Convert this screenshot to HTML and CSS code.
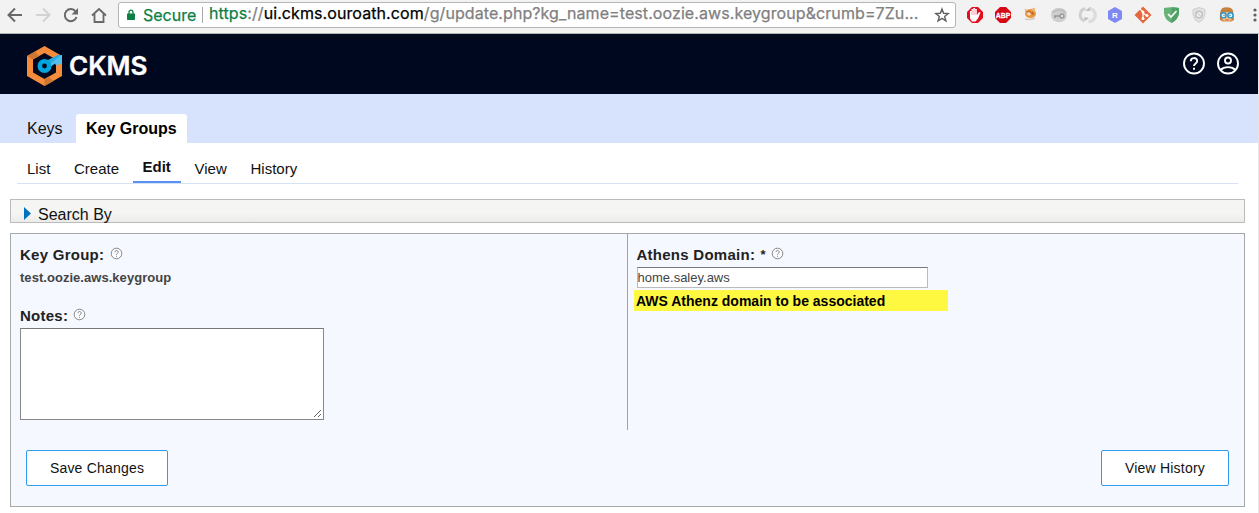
FILE: index.html
```html
<!DOCTYPE html>
<html lang="en">
<head>
<meta charset="utf-8">
<title>CKMS</title>
<link rel="stylesheet" href="styles.css">
</head>
<body>
<div class="browser">
  <svg class="nav-icons" width="118" height="33" viewBox="0 0 118 33" fill="none" stroke="#686868" stroke-width="2">
    <path d="M22 15H9M15 8.500 8.500 15l6.500 6.500"/>
    <path stroke="#d2d2d2" d="M36 15h13M43 8.500 49.500 15 43 21.500"/>
    <path d="M75.600 11.500A6 6 0 1 0 76.500 17"/>
    <path fill="#686868" stroke="none" d="M78 8v6.500h-6.500z"/>
    <path d="M92 15.500 99 9l7 6.500M94.500 14v8h9v-8" stroke-width="1.800"/>
  </svg>
  <div class="omnibox">
    <svg class="lock" width="8" height="12" viewBox="0 0 8 12"><path d="M2 5V3.200a2 2 0 0 1 4 0V5" fill="none" stroke="#0b8043" stroke-width="1.300"/><rect y="4.500" width="8" height="6.500" rx=".7" fill="#0b8043"/></svg>
    <span class="secure">Secure</span>
    <span class="sep"></span>
    <span class="url"><span class="scheme">https</span>://<span class="host">ui.ckms.ouroath.com</span>/g/update.php?kg_name=test.oozie.aws.keygroup&amp;crumb=7Zu...</span>
    <svg class="star" width="16" height="16" viewBox="0 0 16 16"><path d="m8 2 1.600 4.300 4.600.2-3.600 2.900 1.300 4.400L8 11.300l-3.900 2.500 1.300-4.400-3.600-2.900 4.600-.2z" fill="none" stroke="#606060" stroke-width="1.400"/></svg>
  </div>
  <svg class="extensions" width="303" height="33" viewBox="956 0 303 33">
    <path d="M972 7h6l5 5v6l-5 5h-6l-5-5v-6z" fill="#e40d1b"/>
    <path d="M970 15v-4h1.500v-2h1.800v-1h1.800v1h1.800v2l.3 4 1.800-3 1.500.5-2.500 6-2.500 3h-3.500l-2-3z" fill="#fff"/><path d="M972 10v5m2-6v6m2-5v5" stroke="#f36" stroke-width=".5"/>
    <path d="M1000 7h6l5 5v6l-5 5h-6l-5-5v-6z" fill="#d60a16"/>
    <text class="abp" x="995.800" y="17.800" textLength="14.400" lengthAdjust="spacingAndGlyphs">ABP</text>
    <ellipse cx="1030.500" cy="13.500" rx="5.500" ry="4.500" fill="#e9953f"/><path d="M1024.500 8.500l4 2-2 4zM1031 9l4-1.500-.5 5z" fill="#edb477"/><circle cx="1029" cy="14" r="1.600" fill="#fae3c4"/><circle cx="1032.500" cy="13" r="1" fill="#a85d24"/><path d="M1026 12l3-1 5 4" stroke="#b9692a" fill="none"/><path d="M1025 19q5 1.500 10-1" stroke="#d5cdc5" stroke-width="1.500" fill="none"/>
    <ellipse cx="1059" cy="15" rx="8" ry="7.300" fill="#cfcfcf"/><path d="M1052 12.500q7-5 14 0" fill="none" stroke="#bdbdbd" stroke-width="2"/><path d="M1054 16h6m-5 0v2" stroke="#999" stroke-width="1.500"/><circle cx="1062" cy="16" r="2" fill="#ddd" stroke="#999" stroke-width="1.400"/>
    <path d="M1085.500 8.500a6.500 6.500 0 0 0-1 12.500" fill="none" stroke="#d0d0d0" stroke-width="3"/><path d="M1089 8.500a6.500 6.500 0 0 1-.5 13" fill="none" stroke="#dcdcdc" stroke-width="3.500"/><path d="M1085 11l5-4v4zM1084 17l5 1-4 3z" fill="#bfbfbf"/>
    <path d="M1115 7l7 4v8l-7 4-7-4v-8z" fill="#8089f2"/><text class="ext-r" x="1112" y="18">R</text>
    <path d="M1143 6.500l8.500 8.500-8.500 8.500-8.500-8.500z" fill="#e4683e"/><path d="M1140 9l3 3v7m0-6 4 3" stroke="#fff" stroke-width="1.200" fill="none"/><g fill="#fff"><circle cx="1143" cy="12" r="1.500"/><circle cx="1143" cy="18.500" r="1.500"/><circle cx="1147" cy="15.500" r="1.500"/></g>
    <path d="M1164 8q7-1.600 15 0v5q-1 7-7.500 10-7-3-7.500-10z" fill="#67b279"/><path d="M1171.500 7.200q4 0 7.500.8v5q-1 7-7.500 10z" fill="#4fa166"/><path d="m1168 14 3 3 5.500-6" fill="none" stroke="#fff" stroke-width="1.700"/>
    <path d="M1193 9.500l6-2 6 2v5q-1 6-6 8-5-2-6-8z" fill="#e2e2e2" stroke="#cfcfcf"/><circle cx="1199" cy="14.500" r="3.300" fill="#eee" stroke="#c1c1c1" stroke-width="1.500"/><path d="m1197 12.500 4 4" stroke="#c1c1c1"/>
    <path d="M1220 20q-1-12 4-12.500 7-1 9 3l1 9.500-3 1.500h-8z" fill="#c5803e"/><path d="M1222.500 12h9v8l-4.500 2-4.500-2z" fill="#f7be82"/><g fill="#e6f8ff" stroke="#2596cf" stroke-width="1.400"><circle cx="1223.500" cy="15.300" r="2.600"/><circle cx="1230.500" cy="15.300" r="2.600"/></g><path d="M1223.500 15.300h1m5 0h1" stroke="#234"/><path d="M1225 20h4" stroke="#d25c48"/>
    <g fill="#606060"><circle cx="1255" cy="10" r="1.600"/><circle cx="1255" cy="15" r="1.600"/><circle cx="1255" cy="20" r="1.600"/></g>
  </svg>
</div>
<div class="page">
  <header class="masthead">
    <svg width="36" height="40" viewBox="0 0 36 40">
      <path d="M17.500 0 35 10v20L17.500 40 0 30V10zM17.500 7 6 13.500v13L17.500 33 29 26.500v-13z" fill="#f58c3c" fill-rule="evenodd"/>
      <path d="M0 10 6 13.500 12 10 8 5.500zM17.500 33v7l9-5-5-4.500z" fill="#cb7631"/>
      <path d="M20 15 31 9h4v8.500l-6 2-1-2-4 3z" fill="#54bdec"/>
      <path d="M19 15 31 9h3L22 19z" fill="#25aae1"/>
      <circle cx="17.500" cy="20" r="4.700" fill="#020922" stroke="#00a3dc" stroke-width="4.600"/>
    </svg>
    <span class="brand">CKMS</span>
    <svg class="user-icons" width="60" height="24" viewBox="0 0 60 24" fill="none" stroke="#fff" stroke-width="1.900">
      <circle cx="13" cy="12.500" r="10"/><path d="M9.800 10.300c0-4.300 6.400-4.200 6.400-.3 0 2.500-3.200 2.300-3.200 5"/><path d="M13 16.800v2"/>
      <circle cx="47" cy="12.500" r="10"/><circle cx="47" cy="9.500" r="3"/><path d="M39.500 19c3.500-3.800 11.500-3.800 15 0"/>
    </svg>
  </header>
  <nav class="tabs"><a class="tab">Keys</a><a class="tab tab-active">Key Groups</a></nav>
  <nav class="subnav"><a class="s-list">List</a><a class="s-create">Create</a><a class="s-active">Edit</a><a class="s-view">View</a><a>History</a></nav>
  <div class="search"><i class="arrow"></i><span>Search By</span></div>
  <main class="panel">
    <div class="columns">
      <section class="left">
        <div class="label-row"><b class="lb-group">Key Group:</b><svg class="help" width="13" height="13" viewBox="0 0 13 13"><circle cx="6.500" cy="6.500" r="5.300"/><path d="M4.900 5.200c0-2.300 3.300-2.200 3.300-.1 0 1.300-1.700 1.200-1.700 2.600M6.500 8.800v1"/></svg></div>
        <div class="value">test.oozie.aws.keygroup</div>
        <div class="label-row notes"><b class="lb-notes">Notes:</b><svg class="help" width="13" height="13" viewBox="0 0 13 13"><circle cx="6.500" cy="6.500" r="5.300"/><path d="M4.900 5.200c0-2.300 3.300-2.200 3.300-.1 0 1.300-1.700 1.200-1.700 2.600M6.500 8.800v1"/></svg></div>
        <div class="notes-box"><svg width="9" height="9" viewBox="0 0 9 9"><path d="M1 8 8 1M5 8l3-3" stroke="#555" stroke-width=".9"/></svg></div>
      </section>
      <section class="right">
        <div class="label-row"><b class="lb-athens">Athens Domain:</b><b class="required">*</b><svg class="help" width="13" height="13" viewBox="0 0 13 13"><circle cx="6.500" cy="6.500" r="5.300"/><path d="M4.900 5.200c0-2.300 3.300-2.200 3.300-.1 0 1.300-1.700 1.200-1.700 2.600M6.500 8.800v1"/></svg></div>
        <div class="field">home.saley.aws</div>
        <div class="note">AWS Athenz domain to be associated</div>
      </section>
    </div>
    <div class="actions"><button class="btn save">Save Changes</button><button class="btn history">View History</button></div>
  </main>
</div>
</body>
</html>
```
FILE: styles.css
```css
* { box-sizing: border-box; }
body { margin: 0; width: 1259px; height: 513px; overflow: hidden; background: #fff; font-family: "Liberation Sans", Arial, sans-serif; color: #111; }
svg { display: block; flex: none; }
.browser { display: flex; height: 34px; background: #f2f2f2; border-bottom: 1px solid #b0b5b5; font-family: Inter, sans-serif; }
.omnibox { display: flex; width: 838px; height: 26px; margin-top: 2px; padding-left: 8px; background: #fff; border: 1px solid #b5b5b5; border-radius: 3px; white-space: nowrap; line-height: 24px; }
.lock { margin-top: 6px; }
.secure { width: 58px; margin-left: 8px; font-size: 16px; color: #0b8043; -webkit-text-stroke: .25px #0b8043; }
.sep { width: 1px; height: 16px; margin: 4px 6px 0 1px; background: #aaa; }
.url { width: 725px; font-size: 16px; line-height: 21px; letter-spacing: .085px; color: #808080; -webkit-text-stroke: .25px; }
.scheme { color: #0b8043; }
.host { color: #000; }
.star { margin-top: 4px; }
.abp { font: bold 8px "Liberation Sans", sans-serif; fill: #fff; stroke: #fff; stroke-width: .3px; }
.ext-r { font: bold 8px "Liberation Sans", sans-serif; fill: #fff; }
.page { height: 479px; border-right: 1px solid #e5e5e5; }
.masthead { display: flex; height: 60px; padding: 12px 17px 0 27px; background: #000820; }
.brand { margin-left: 6px; font: 600 26px/40px Inter, sans-serif; color: #fff; -webkit-text-stroke: .4px #fff; }
.user-icons { margin: 5px 0 0 auto; }
.tabs { display: flex; height: 49px; padding: 20px 0 0 17px; background: #d7e2fd; font-size: 16px; line-height: 29px; }
.tab { width: 59px; padding-left: 10px; }
.tab-active { width: 111px; background: #fff; border-radius: 3px 3px 0 0; font-weight: bold; color: #000; }
.subnav { display: flex; width: 1221px; height: 41px; margin-left: 17px; padding: 15px 0 0 10px; border-bottom: 1px solid #d5e2f3; font-size: 15px; line-height: 22px; }
.s-list { width: 47px; }
.s-create { width: 59px; }
.s-active { width: 48px; height: 25px; margin-right: 13.5px; padding-left: 9.5px; line-height: 18px; font-weight: bold; border-bottom: 2px solid #5b8ff0; }
.s-view { width: 56px; }
.search { display: flex; height: 24px; width: 1235px; margin: 15px 0 0 10px; padding-left: 13px; background: linear-gradient(#f5f5f3 60%, #ebebea); border: 1px solid #bbb; font-size: 16px; line-height: 30px; }
.arrow { width: 7px; height: 13px; margin: 7px 7px 0 0; background: #0072bc; clip-path: polygon(0 0, 100% 50%, 0 100%); }
.panel { width: 1235px; height: 274px; margin: 10px 0 0 10px; background: #f5f8ff; border: 1px solid #a6a8ab; }
.columns { display: flex; height: 196px; }
.left { width: 617px; padding: 11px 0 0 9px; border-right: 1px solid #a0a3a8; }
.right { padding: 11px 0 0 8px; }
.label-row { display: flex; height: 19px; font-size: 15px; line-height: 19px; letter-spacing: .26px; color: #222; }
.lb-group { width: 90px; }
.lb-notes { width: 53px; }
.lb-athens { width: 124px; }
.required { width: 10px; font-size: 13px; }
.help { margin-top: 2px; fill: #fafcff; stroke: #777; stroke-width: .9; }
.value { height: 26px; font-size: 13px; font-weight: bold; line-height: 27px; letter-spacing: .04px; color: #444; }
.notes { margin-top: 16px; }
.notes-box { display: flex; justify-content: flex-end; align-items: flex-end; width: 304px; height: 92px; margin-top: 3px; padding: 1px; background: #fff; border: 1px solid #888; border-top-color: #777; }
.right .label-row { padding-left: .5px; }
.field { width: 291px; height: 21px; margin: 3px 0 2px 1px; background: #fff; border: 1px solid #bbb; border-top-color: #777; font-size: 13px; line-height: 20px; text-indent: -.5px; color: #444; }
.note { width: 314px; height: 21px; margin-left: -2px; padding-left: 2px; background: #fff840; color: #000; font-size: 14px; font-weight: bold; line-height: 23px; }
.actions { display: flex; justify-content: space-between; padding: 20px 15px 0; }
.btn { height: 36px; padding: 0; background: #fff; border: 1px solid #2f9bed; border-radius: 2px; font: 14px "Liberation Sans", Arial, sans-serif; letter-spacing: .2px; color: #111; }
.save { width: 142px; }
.history { width: 128px; }
```
